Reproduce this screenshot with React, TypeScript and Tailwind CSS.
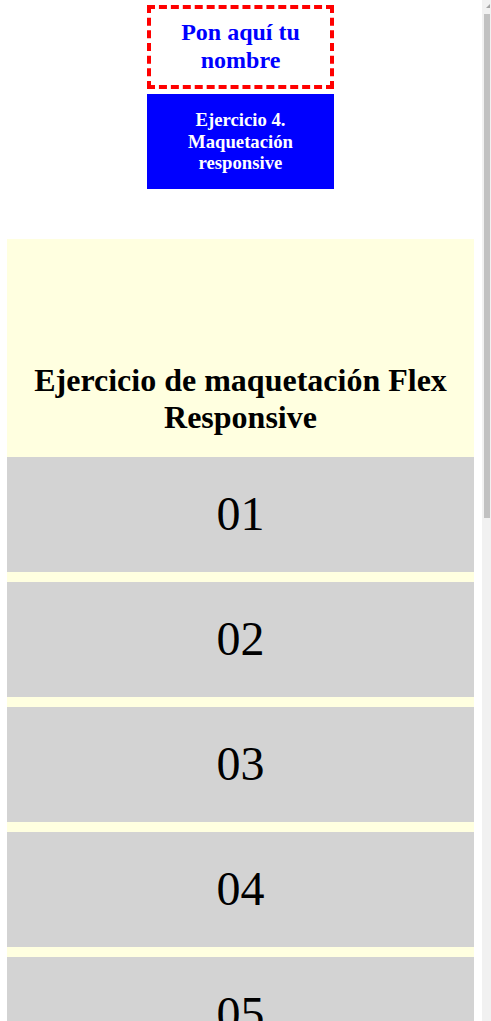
import React from "react";

export default function App() {
  const items = ["01","02","03","04","05","06","07","08","09","10","11","12"];
  return (
    <div className="h-[1021px] w-[491px] overflow-hidden flex bg-white" style={{ fontFamily: '"Liberation Serif", "Times New Roman", serif' }}>
      <div className="w-[481px] h-[1021px] overflow-hidden shrink-0">
        <div className="pt-[5px] flex flex-col items-center">
          <div className="w-[187px] border-4 border-dashed border-[#ff0000] pt-[10px] pb-[11px] text-center">
            <h2 className="text-[24px] leading-[27.6px] font-bold text-[#0000ff]">Pon aquí tu nombre</h2>
          </div>
          <div className="mt-[5px] w-[187px] h-[95px] bg-[#0000ff] flex items-center justify-center text-center px-[10px]">
            <h3 className="text-[18.72px] leading-[21.5px] font-bold text-white">Ejercicio 4. Maquetación responsive</h3>
          </div>
        </div>
        <div className="mt-[50px] mx-[7px] bg-[#ffffe0] pb-[10px]">
          <h1 className="pt-[123px] pb-[21px] text-[32px] leading-[36.8px] font-bold text-black text-center">
            Ejercicio de maquetación Flex Responsive
          </h1>
          <div className="flex flex-col gap-[10px]">
            {items.map((n) => (
              <div key={n} className="h-[115px] bg-[#d3d3d3] flex items-center justify-center text-[48px] text-black">
                {n}
              </div>
            ))}
          </div>
        </div>
      </div>
      <div className="w-[10px] h-[1021px] bg-white pl-[1px] shrink-0">
        <div className="w-[9px] h-[1021px] bg-[#f1f1f1] flex flex-col items-end">
          <div className="h-[14px] w-full flex items-start justify-end pt-[4px] pr-[1px]">
            <svg width="4" height="4" viewBox="0 0 4 4">
              <polygon points="4,0 4,4 0,4" fill="#a3a3a3" />
            </svg>
          </div>
          <div className="w-[6px] h-[504px] bg-[#c1c1c1] mr-[1px]" />
        </div>
      </div>
    </div>
  );
}
